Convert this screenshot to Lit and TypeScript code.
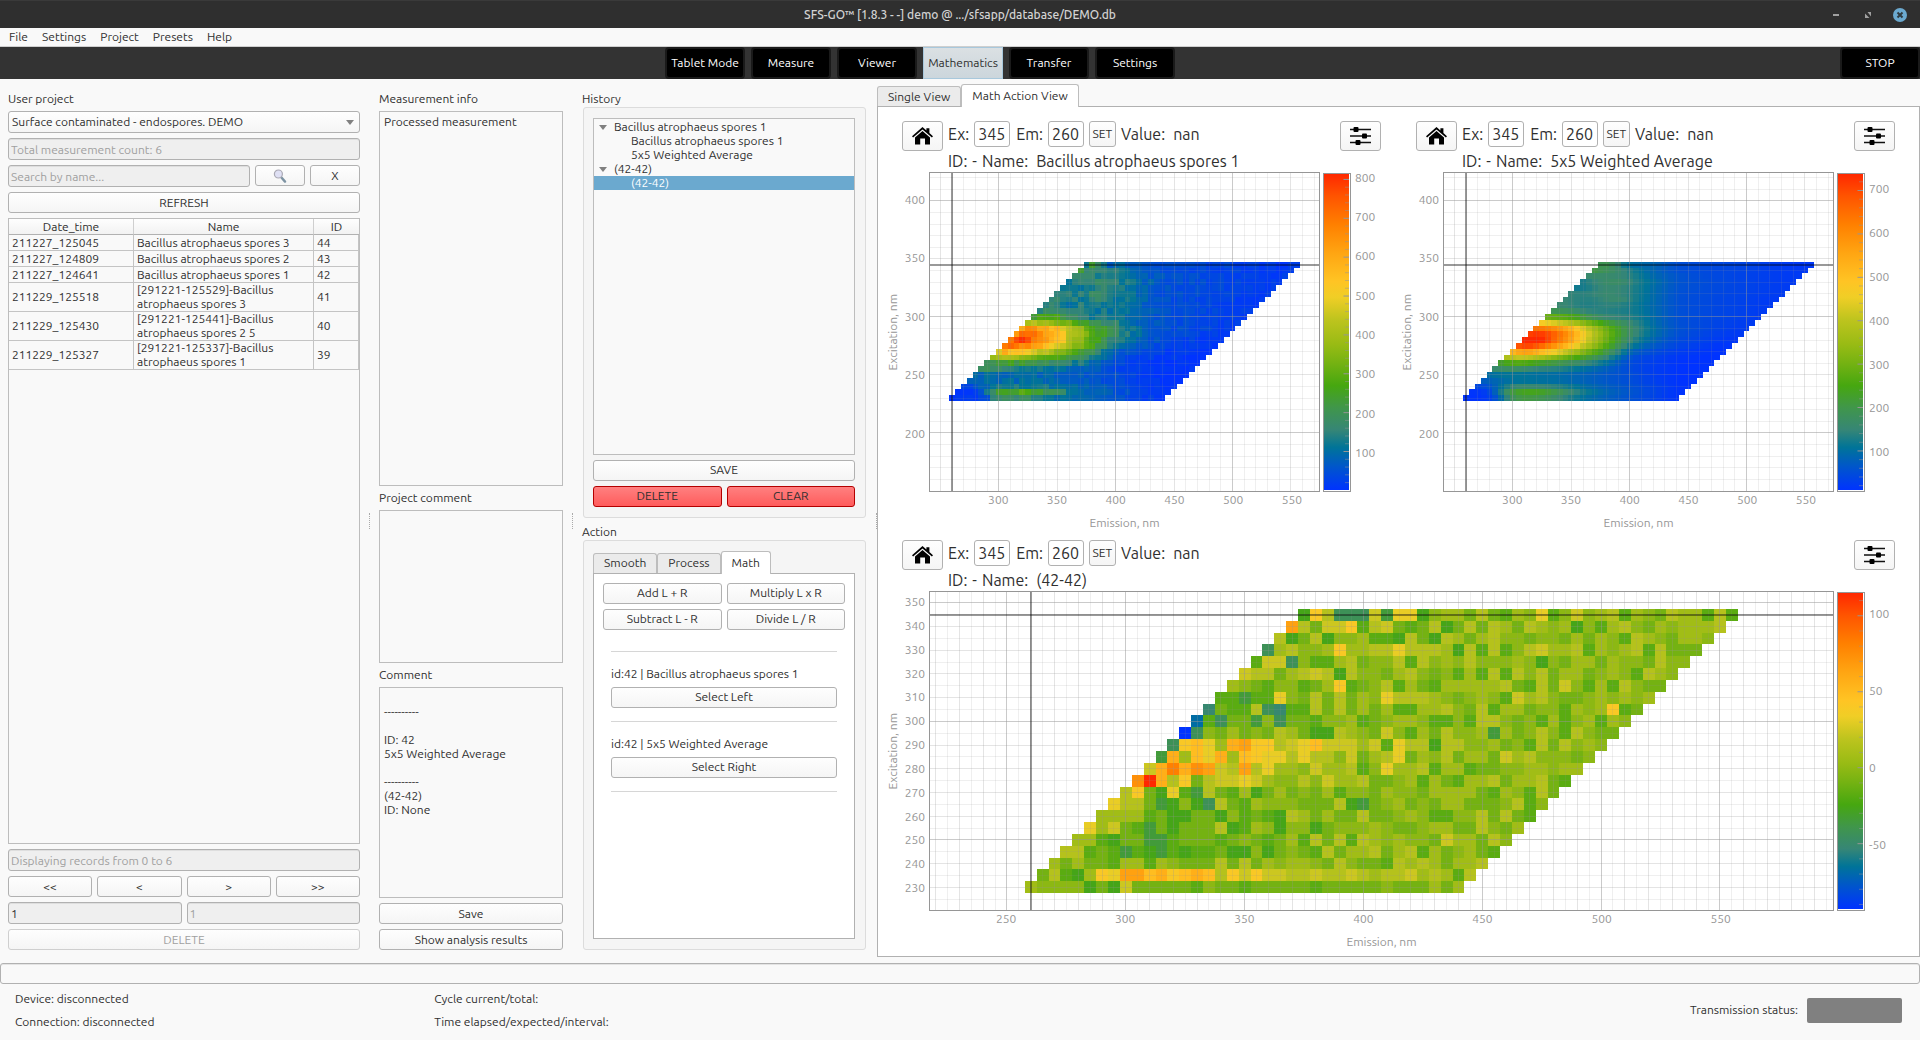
import { LitElement, html, svg, css, nothing } from "lit";
import { customElement, property } from "lit/decorators.js";
import { classMap } from "lit/directives/class-map.js";
import { styleMap } from "lit/directives/style-map.js";

/* ---------- colour scale ---------- */

const STOPS: [number, number[]][] = [
  [0, [0, 51, 255]],
  [0.07, [0, 84, 206]],
  [0.135, [0, 116, 152]],
  [0.19, [54, 134, 118]],
  [0.26, [64, 150, 75]],
  [0.33, [70, 167, 16]],
  [0.4, [116, 178, 18]],
  [0.46, [152, 187, 20]],
  [0.54, [190, 196, 30]],
  [0.61, [240, 206, 38]],
  [0.66, [255, 196, 36]],
  [0.75, [255, 165, 18]],
  [0.84, [255, 128, 0]],
  [0.93, [255, 84, 0]],
  [1, [255, 40, 0]],
];

function colorAt(t: number): string {
  const v = Math.min(1, Math.max(0, t));
  let i = 1;
  while (i < STOPS.length - 1 && STOPS[i][0] < v) i++;
  const [a, ca] = STOPS[i - 1];
  const [b, cb] = STOPS[i];
  const k = (v - a) / (b - a);
  return `rgb(${ca.map((c, n) => Math.round(c + (cb[n] - c) * k)).join(",")})`;
}

/* ---------- spectra: one row per excitation, 345 down to 230 nm ---------- */

const CELLS = 37;
const EXCITATIONS = Array.from({ length: 24 }, (_, i) => 345 - i * 5);

/** Knots of emission wavelength and intensity for each excitation. */
const KNOTS: string[] = [
  "375:150 380:220 387:190 392:80 400:90 420:85 440:50 460:45 500:35 540:15",
  "370:250 375:180 395:160 402:120 420:80 440:45 500:32 540:18",
  "365:150 380:150 400:130 420:85 440:60 460:45 500:30 540:18",
  "360:100 365:140 380:160 390:190 400:140 420:100 440:55 500:32 540:18",
  "355:100 380:150 400:130 420:90 440:55 500:32 540:18",
  "350:150 360:135 380:160 400:130 420:90 440:50 500:30 535:18",
  "345:150 360:125 380:140 390:180 400:130 420:90 440:50 500:28 525:15",
  "340:150 360:120 380:140 400:120 420:85 440:50 500:28 525:15",
  "335:160 350:170 360:130 380:130 400:120 420:90 440:50 500:28 520:15",
  "330:250 350:260 360:190 380:135 400:130 420:90 440:50 500:28 510:15",
  "325:430 340:400 360:320 380:220 400:150 420:90 440:50 500:20",
  "320:580 325:660 340:580 350:550 360:430 380:290 400:165 420:100 440:55 500:18",
  "315:640 320:740 335:660 350:570 360:450 380:300 400:160 420:95 440:50 495:15",
  "310:700 320:790 340:610 350:570 360:430 380:290 400:140 420:80 440:42 490:12",
  "305:680 310:750 320:680 340:550 350:480 360:400 380:260 400:110 420:65 440:35 485:8",
  "300:450 305:580 320:520 330:450 340:430 360:310 380:200 400:70 420:45 440:22 480:6",
  "295:380 300:420 320:370 340:300 360:220 380:140 400:45 420:30 440:14 475:5",
  "290:190 300:260 320:220 340:180 360:150 380:100 400:40 420:25 440:10 470:4",
  "285:170 300:170 320:130 340:130 360:90 380:70 400:40 420:22 440:10 465:4",
  "280:90 320:92 360:75 380:60 400:50 420:24 440:10 460:4",
  "275:70 300:100 340:90 380:60 400:45 420:25 440:10 455:4",
  "270:40 280:50 300:140 340:120 360:90 380:70 400:55 420:35 440:12 450:6",
  "265:8 280:12 285:70 290:150 300:250 320:280 340:210 360:130 380:85 400:60 420:38 440:8",
  "260:5 280:15 290:60 300:190 320:180 340:130 360:90 380:70 400:50 420:35 440:5",
];

function interpolate(knots: string, em: number): number {
  const pts = knots.split(" ").map((p) => p.split(":").map(Number));
  if (em <= pts[0][0]) return pts[0][1];
  for (let i = 1; i < pts.length; i++) {
    if (em <= pts[i][0]) {
      const k = (em - pts[i - 1][0]) / (pts[i][0] - pts[i - 1][0]);
      return pts[i - 1][1] + (pts[i][1] - pts[i - 1][1]) * k;
    }
  }
  return pts[pts.length - 1][1];
}

function jitter(r: number, c: number): number {
  const s = Math.sin(r * 127.1 + c * 311.7) * 43758.5453;
  return (s - Math.floor(s)) * 2 - 1;
}

const clean = EXCITATIONS.map((ex, r) =>
  Array.from({ length: CELLS }, (_, c) => interpolate(KNOTS[r], ex + 30 + c * 5)),
);

const measured = clean.map((row, r) =>
  row.map((v, c) => (v - 2) / 812 + (jitter(r, c) * (10 + Math.min(v, 150) * 0.13)) / 812),
);

/** Weighted mean over the neighbouring cells of the skewed matrix. */
const averaged = clean.map((row, r) =>
  row.map((_, c) => {
    let sum = 0;
    let weight = 0;
    for (let dr = -1; dr <= 1; dr++) {
      for (let dc = -2; dc <= 2; dc++) {
        const other = clean[r + dr]?.[c + dc + dr];
        if (other === undefined) continue;
        const w = (dr ? 1 : 4) * (3 - Math.abs(dc));
        sum += other * w;
        weight += w;
      }
    }
    return (sum / weight - 8) / 710;
  }),
);

/** Difference matrix in 26 levels, a lowest and z highest. */
const DIFFERENCE = [
  "iqngggohppilmmknkjmlpjlolmnjmlknmmjnj",
  "tnkooqjnokjkniknknmknmlmiljmnlkmlmmmn",
  "niknillmjjinkinmkmnllkllkmkmljnmlkmml",
  "gmnllmqmmnnpnnnminjnjlnommnjmlmnjnkkk",
  "joogljjmnkllnjnlmlnlllmlilkmmkmllknll",
  "onnkmnoninllkmnlkljmjnjnlnkmmklmljnml",
  "mlkjlljkmqjklnjmkjmmmmmnkjnkoljmjnlkk",
  "jjhjjplknknkmlpnnnmlklmljomnlkklmlmlm",
  "fkjjngfjjnknkmkmjjmmnlknjmmklljmlmqjk",
  "djgkkhlgkkjllmjklmmljjljnnlkljmjlmjml",
  "aglkmklknmkiinmlkoljmknllmhmklnljnlkk",
  "gqrpmstqqnoprooomojpnninnllmkljnknlml",
  "hsmrpsmrqppnpnnlokmnpkmlnkmmkomnlllkl",
  "osvsutontnpmmlommnjlpmmnjmmjkkllmmlmm",
  "uzsnqknoopomllnlommnkklmjmkjmmnkmmnkj",
  "nqkipjhnkjmikmklkmjllkmllkmmmmkjmljnk",
  "pnnkhilignkjmlllkkknihklmklkmmkkklnj",
  "mmmmjkiikkiljkjinmkmkknkklmljjllnknkj",
  "pmokjhkikkknijmlilliklllmlkklmmkknlkm",
  "mmjikkhhjkkkjklkjkmjnknjnmlmllkommknl",
  "nnjkjhjihjijjkiiliklkjnkmmnkmnjmklmkj",
  "mkmkkjmmjmlkkknknkmlmmlknlkkjnmnmkmmn",
  "knjimqpttrsqrsrnqoqoonnonnonmnnomnmjn",
  "mllllikiokkkkkjlkkjkkkkkjkkkkklkkkmkm",
].map((row) => [...row.padEnd(CELLS, "l")].map((ch) => (ch.charCodeAt(0) - 97) / 25));

/* ---------- chart ---------- */

interface ChartModel {
  name: string;
  cells: number[][];
  x: [number, number];
  y: [number, number];
  steps: [number, number, number];
  xTicks: number[];
  yTicks: number[];
  scale: { min: number; max: number; major: number; minor: number };
}

const range = (from: number, to: number, step: number) => {
  const out: number[] = [];
  for (let v = Math.ceil(from / step) * step; v <= to; v += step) out.push(v);
  return out;
};

const UPPER = {
  x: [241, 574] as [number, number],
  y: [150, 424] as [number, number],
  steps: [100, 50, 10] as [number, number, number],
  xTicks: range(300, 550, 50),
  yTicks: range(200, 400, 50),
};

const CHARTS: ChartModel[] = [
  { name: "Bacillus atrophaeus spores 1", cells: measured, ...UPPER, scale: { min: 1, max: 814, major: 100, minor: 20 } },
  { name: "5x5 Weighted Average", cells: averaged, ...UPPER, scale: { min: 10, max: 738, major: 100, minor: 20 } },
  {
    name: "(42-42)",
    cells: DIFFERENCE,
    x: [217.6, 597.6],
    y: [220.4, 354.6],
    steps: [50, 10, 5],
    xTicks: range(250, 550, 50),
    yTicks: range(230, 350, 10),
    scale: { min: -93, max: 115, major: 50, minor: 10 },
  },
];

const controls = css`
  * {
    box-sizing: border-box;
  }
  button,
  input,
  select,
  textarea {
    font: inherit;
    color: inherit;
    margin: 0;
    min-width: 0;
    outline: none;
  }
  button {
    height: 21px;
    padding: 0 4px;
    border: 1px solid #b1b1b1;
    border-radius: 3px;
    background: linear-gradient(#fefefe, #f5f5f5);
    line-height: 18px;
  }
`;

@customElement("spectrum-chart")
export class SpectrumChart extends LitElement {
  static styles = [
    controls,
    css`
      :host {
        display: grid;
        grid-template-columns: 14px 29px minmax(0, 1fr) 3px 28px 30px;
        grid-template-rows: 30px 21px minmax(120px, 1fr) 39px;
        min-width: 0;
      }
      .bar {
        grid-column: 1 / -1;
        display: flex;
        align-items: flex-start;
        padding-left: 16px;
        font-size: 16px;
        line-height: 26px;
      }
      .bar .icon {
        width: 41px;
        height: 30px;
        padding: 0;
        display: grid;
        place-items: center;
      }
      .bar label {
        margin-left: 5px;
      }
      .bar input {
        width: 36px;
        height: 26px;
        margin-left: 5px;
        margin-right: 1px;
        padding: 0 3px;
        border: 1px solid #b1b1b1;
        border-radius: 3px;
        background: #fff;
      }
      .bar .set {
        width: 27px;
        height: 26px;
        margin: 0 5px 0 4px;
        padding: 0;
        font-size: 12px;
      }
      .bar output {
        margin-left: 8px;
        flex: 1;
      }
      .name {
        grid-column: 1 / -1;
        display: flex;
        gap: 5px;
        padding-left: 62px;
        font-size: 16px;
        line-height: 21px;
        white-space: nowrap;
      }
      .name b {
        font-weight: 400;
        margin-left: 3px;
      }
      .ylabel {
        display: grid;
        place-items: center;
        color: #969696;
      }
      .ylabel span {
        writing-mode: vertical-rl;
        transform: rotate(180deg);
        white-space: nowrap;
      }
      .yticks,
      .xticks,
      .sticks {
        position: relative;
        color: #969696;
      }
      .tick {
        position: absolute;
        line-height: 14px;
      }
      .yticks .tick {
        right: 4px;
        transform: translateY(-50%);
      }
      .xticks .tick {
        top: 1px;
        transform: translateX(-50%);
      }
      .sticks .tick {
        left: 4px;
        transform: translateY(-50%);
      }
      .plot {
        grid-column: 3;
        contain: size;
        border: 1px solid #969696;
        background: #fff;
        min-height: 0;
        display: grid;
      }
      .plot svg {
        width: 100%;
        height: 100%;
        min-height: 0;
        display: block;
      }
      .minor,
      .mid,
      .major {
        vector-effect: non-scaling-stroke;
        stroke-width: 1px;
        stroke: rgba(150, 150, 150, 0.15);
      }
      .mid {
        stroke: rgba(150, 150, 150, 0.26);
      }
      .major {
        stroke: rgba(150, 150, 150, 0.5);
      }
      .cross {
        vector-effect: non-scaling-stroke;
        stroke-width: 2px;
        stroke: rgba(0, 0, 0, 0.4);
      }
      .scale {
        grid-column: 5;
        contain: size;
        border: 1px solid #969696;
        padding: 0 1px 1px 0;
        margin-top: 1px;
        display: grid;
        min-height: 0;
      }
      .scale svg {
        width: 100%;
        height: 100%;
        min-height: 0;
        display: block;
      }
      .scale line {
        stroke: #969696;
      }
      .xfoot {
        grid-column: 3;
        display: grid;
        grid-template-rows: 16px 1fr;
        color: #969696;
        text-align: center;
      }
      .xlabel {
        line-height: 14px;
        padding-top: 8px;
      }
    `,
  ];

  @property({ attribute: false }) model!: ChartModel;

  private cells() {
    const { cells, y } = this.model;
    return cells.map((row, r) => {
      const ex = EXCITATIONS[r];
      return row.map(
        (t, c) => svg`<rect x=${ex + 27.5 + c * 5} y=${y[1] - ex - 2.5} width="5" height="5" fill=${colorAt(t)} />`,
      );
    });
  }

  private grid() {
    const { x, y, steps } = this.model;
    const level = (v: number) => (v % steps[0] === 0 ? "major" : v % steps[1] === 0 ? "mid" : "minor");
    return [
      ...range(x[0], x[1], steps[2]).map(
        (v) => svg`<line class=${level(v)} x1=${v} x2=${v} y1="0" y2=${y[1] - y[0]} />`,
      ),
      ...range(y[0], y[1], steps[2]).map(
        (v) => svg`<line class=${level(v)} x1=${x[0]} x2=${x[1]} y1=${y[1] - v} y2=${y[1] - v} />`,
      ),
    ];
  }

  render() {
    const m = this.model;
    const w = m.x[1] - m.x[0];
    const h = m.y[1] - m.y[0];
    const s = m.scale;
    const pct = (v: number) => `${(((s.max - v) / (s.max - s.min)) * 100).toFixed(2)}%`;
    return html`
      <div class="bar">
        <button class="icon" aria-label="Reset view">
          <svg width="21" height="18" viewBox="0 0 21 18">
            <path d="M10.5 0 14.4 3.4V1.2H17.4V6L21 9.2 19.9 10.6 10.5 2.4 1.1 10.6 0 9.2Z" />
            <path d="M10.5 4 18 10.4V17.4H13V11.6H8.2V17.4H3V10.4Z" />
          </svg>
        </button>
        <label for="ex">Ex:</label><input id="ex" .value=${"345"} />
        <label for="em">Em:</label><input id="em" .value=${"260"} />
        <button class="set">SET</button>
        <span>Value:</span><output>nan</output>
        <button class="icon" aria-label="Chart settings">
          <svg width="21" height="18" viewBox="0 0 21 18">
            <path d="M0 2.5H21M0 9H21M0 15.5H21" stroke="#111" stroke-width="1.5" />
            <rect x="3.5" y="0" width="5" height="5" rx="1" />
            <rect x="12" y="6.5" width="5" height="5" rx="1" />
            <rect x="5.5" y="13" width="5" height="5" rx="1" />
          </svg>
        </button>
      </div>
      <div class="name"><span>ID:</span><span>-</span><span>Name:</span><b>${m.name}</b></div>
      <div class="ylabel"><span>Excitation, nm</span></div>
      <div class="yticks">
        ${m.yTicks.map(
          (v) => html`<span class="tick" style=${styleMap({ top: `${((m.y[1] - v) / h) * 100}%` })}>${v}</span>`,
        )}
      </div>
      <div class="plot">
        <svg viewBox="${m.x[0]} 0 ${w} ${h}" preserveAspectRatio="none" role="img" aria-label=${m.name}>
          <g shape-rendering="crispEdges">${this.cells()}${this.grid()}
            <line class="cross" x1="260" x2="260" y1="0" y2=${h} />
            <line class="cross" x1=${m.x[0]} x2=${m.x[1]} y1=${m.y[1] - 345} y2=${m.y[1] - 345} />
          </g>
        </svg>
      </div>
      <div class="scale">
        <svg aria-hidden="true">
          <defs>
            <linearGradient id="ramp" x1="0" y1="1" x2="0" y2="0">
              ${STOPS.map(([t]) => svg`<stop offset=${t} stop-color=${colorAt(t)} />`)}
            </linearGradient>
          </defs>
          <rect width="100%" height="100%" fill="url(#ramp)" />
          ${range(s.min, s.max, s.minor).map(
            (v) => svg`<line x1=${v % s.major ? "84%" : "78%"} x2="100%" y1=${pct(v)} y2=${pct(v)}
              stroke-opacity=${v % s.major ? 0.5 : 1} />`,
          )}
        </svg>
      </div>
      <div class="sticks">
        ${range(s.min, s.max, s.major).map(
          (v) => html`<span class="tick" style=${styleMap({ top: pct(v) })}>${v}</span>`,
        )}
      </div>
      <div class="xfoot">
        <div class="xticks">
          ${m.xTicks.map(
            (v) => html`<span class="tick" style=${styleMap({ left: `${((v - m.x[0]) / w) * 100}%` })}>${v}</span>`,
          )}
        </div>
        <div class="xlabel">Emission, nm</div>
      </div>
    `;
  }
}

/* ---------- application ---------- */

const MENU = ["File", "Settings", "Project", "Presets", "Help"];
const MODES = ["Tablet Mode", "Measure", "Viewer", "Mathematics", "Transfer", "Settings"];
const RECORDS = [
  ["211227_125045", "Bacillus atrophaeus spores 3", "44"],
  ["211227_124809", "Bacillus atrophaeus spores 2", "43"],
  ["211227_124641", "Bacillus atrophaeus spores 1", "42"],
  ["211229_125518", "[291221-125529]-Bacillus atrophaeus spores 3", "41"],
  ["211229_125430", "[291221-125441]-Bacillus atrophaeus spores 2 5", "40"],
  ["211229_125327", "[291221-125337]-Bacillus atrophaeus spores 1", "39"],
];
const HISTORY = [
  { text: "Bacillus atrophaeus spores 1", level: 1 },
  { text: "Bacillus atrophaeus spores 1", level: 2 },
  { text: "5x5 Weighted Average", level: 2 },
  { text: "(42-42)", level: 1 },
  { text: "(42-42)", level: 2, selected: true },
];
const COMMENT = "\n----------\n\nID: 42\n5x5 Weighted Average\n\n----------\n(42-42)\nID: None";

const arrow = html`<svg class="arrow" width="8" height="5" viewBox="0 0 8 5" aria-hidden="true">
  <path d="M0 0H8L4 5Z" fill="#808080" />
</svg>`;

@customElement("app-root")
export class AppRoot extends LitElement {
  static styles = [
    controls,
    css`
      :host {
        display: flex;
        flex-direction: column;
        min-height: 100vh;
        background: #f9f9f9;
        color: #2f2f2f;
        font: 12px/14px Ubuntu, "Open Sans", sans-serif;
      }
      .titlebar {
        display: grid;
        grid-template-columns: 1fr auto 1fr;
        align-items: center;
        height: 28px;
        background: #2f2f2f;
        border-top: 1px solid #3a3a3a;
        color: #d3d3d3;
        font-weight: 500;
      }
      .window {
        grid-column: 3;
        justify-self: end;
        display: flex;
        gap: 16px;
        padding-right: 12px;
      }
      .window button {
        width: 16px;
        height: 16px;
        padding: 0;
        border: 0;
        background: none;
        display: grid;
        place-items: center;
      }
      .menu {
        display: flex;
        gap: 14px;
        height: 19px;
        padding-left: 9px;
        border-bottom: 1px solid #cfcfcf;
      }
      .menu button {
        height: 18px;
        padding: 0;
        border: 0;
        background: none;
      }
      .modes {
        display: flex;
        justify-content: space-between;
        background: #333;
        height: 32px;
      }
      .modes nav {
        flex: 1;
        display: flex;
        justify-content: center;
        gap: 6px;
      }
      .modes button {
        min-width: 80px;
        height: 32px;
        padding: 0 4px;
        border: 2px solid #1a1a1a;
        border-radius: 4px;
        background: #000;
        color: #fff;
      }
      .modes .on {
        border: 1px solid #a8c8dc;
        border-radius: 0;
        background: linear-gradient(#dbe0e3, #ccd6dc);
        color: #2f2f2f;
      }
      main {
        flex: 1;
        display: grid;
        grid-template-columns:
          minmax(240px, 352fr) 19px minmax(130px, 184fr) 19px minmax(220px, 284fr)
          11px minmax(560px, 1043fr);
        padding-left: 8px;
      }
      .grip {
        align-self: center;
        justify-self: center;
        height: 16px;
        border-left: 1px dotted #aaa;
      }
      .grip.end {
        justify-self: end;
      }
      .col {
        display: flex;
        flex-direction: column;
        gap: 5px;
        padding: 13px 0 13px;
        min-width: 0;
      }
      .col > label,
      .col > h2 {
        margin: 0;
        font-weight: 400;
        font-size: 12px;
        line-height: 14px;
      }
      .row {
        display: grid;
        gap: 5px;
      }
      .search {
        grid-template-columns: minmax(0, 1fr) 50px 50px;
      }
      .four {
        grid-template-columns: repeat(4, minmax(0, 1fr));
      }
      .two {
        grid-template-columns: repeat(2, minmax(0, 1fr));
      }
      .field {
        width: 100%;
        height: 22px;
        padding: 0 2px;
        border: 1px solid #b1b1b1;
        border-radius: 3px;
        background: #efefef;
        box-shadow: inset 0 1px #dedede;
      }
      .field::placeholder,
      .field:disabled {
        color: #a0a0a0;
      }
      .picker {
        display: grid;
        align-items: center;
      }
      .picker select {
        grid-area: 1 / 1;
        appearance: none;
        height: 22px;
        padding: 0 20px 0 3px;
        border: 1px solid #b1b1b1;
        border-radius: 3px;
        background: linear-gradient(#fefefe, #f5f5f5);
      }
      .picker .arrow {
        grid-area: 1 / 1;
        justify-self: end;
        margin-right: 6px;
        pointer-events: none;
      }
      .lens {
        display: grid;
        place-items: center;
      }
      button:disabled {
        color: #a0a0a0;
        border-color: #cfcfcf;
      }
      .records {
        flex: 1;
        border: 1px solid #bdbdbd;
      }
      table {
        width: 100%;
        border-collapse: separate;
        border-spacing: 0;
        table-layout: fixed;
      }
      th {
        height: 16px;
        padding: 0;
        font-weight: 400;
        border-right: 1px solid #cfcfcf;
        border-bottom: 1px solid #b1b1b1;
        background: linear-gradient(#fefefe, #f2f2f2);
      }
      th:last-child {
        border-right: 0;
      }
      td {
        padding: 0 3px;
        height: 16px;
        border-right: 1px solid #c4c4c4;
        border-bottom: 1px solid #c4c4c4;
      }
      .date {
        width: 125px;
      }
      .id {
        width: 45px;
      }
      textarea {
        display: block;
        resize: none;
        width: 100%;
        padding: 3px 4px;
        border: 1px solid #bdbdbd;
        border-radius: 0;
        background: #f9f9f9;
        line-height: 14px;
      }
      .info {
        flex: 381 1 0;
      }
      .project {
        flex: 151 1 0;
      }
      .comment {
        flex: 211 1 0;
      }
      .col.actions {
        gap: 1px;
      }
      .group {
        display: flex;
        flex-direction: column;
        gap: 5px;
        margin-left: 1px;
        padding: 10px 10px 10px 9px;
        border: 1px solid #dcdcdc;
        border-radius: 3px;
        background: #f5f5f5;
      }
      .group + h2 {
        padding-top: 6px;
      }
      .grow {
        flex: 1 1 0;
      }
      .tree {
        flex: 1;
        margin: 0;
        padding: 1px 0 0;
        list-style: none;
        border: 1px solid #bdbdbd;
        background: #f9f9f9;
      }
      .tree li {
        display: flex;
        align-items: center;
        height: 14px;
        gap: 7px;
        padding-left: 5px;
      }
      .tree .child {
        padding-left: 37px;
      }
      .tree .selected {
        background: #6ba9cf;
        color: #fff;
      }
      .danger {
        border-color: #b40000;
        background: linear-gradient(#ff8080, #ff5c5c);
      }
      .tabs {
        display: flex;
        align-items: flex-end;
        height: 22px;
      }
      .tabs button {
        height: 20px;
        padding: 0 10px;
        border: 1px solid #bdbdbd;
        border-bottom: 0;
        border-radius: 3px 3px 0 0;
        background: #ebebeb;
      }
      .tabs .on {
        height: 23px;
        margin-bottom: -1px;
        background: #fff;
        z-index: 1;
      }
      .tabbed {
        flex: 1;
        display: flex;
        flex-direction: column;
        min-width: 0;
      }
      .pane {
        flex: 1;
        border: 1px solid #b1b1b1;
        background: #fff;
      }
      .math {
        padding: 9px;
      }
      .operands {
        display: flex;
        flex-direction: column;
        padding: 21px 8px 0;
      }
      .operands hr {
        width: 100%;
        margin: 0;
        border: 0;
        border-top: 1px solid #d6d6d6;
      }
      .operands p {
        margin: 15px 0 6px;
      }
      .operands button {
        margin-bottom: 13px;
      }
      .view {
        padding: 5px 0 6px;
      }
      .charts {
        display: grid;
        grid-template-columns: repeat(2, minmax(0, 1fr));
        grid-template-rows: repeat(2, minmax(0, 1fr));
        gap: 9px 19px;
        padding: 14px 24px 6px 8px;
      }
      .wide {
        grid-column: 1 / -1;
      }
      .progress {
        height: 21px;
        border: 1px solid #b1b1b1;
        border-radius: 3px;
        box-shadow: inset 0 1px #e4e4e4;
      }
      footer {
        display: grid;
        grid-template-columns: 419fr 1255fr auto auto;
        align-items: center;
        height: 56px;
        padding: 0 18px 4px 15px;
      }
      footer p {
        margin: 0;
        line-height: 23px;
      }
      .lamp {
        width: 95px;
        height: 25px;
        margin-left: 9px;
        border-radius: 2px;
        background: #808080;
      }
    `,
  ];

  private tabs(names: string[], active: string) {
    return html`<div class="tabs" role="tablist">
      ${names.map(
        (n) => html`<button role="tab" aria-selected=${n === active} class=${classMap({ on: n === active })}>${n}</button>`,
      )}
    </div>`;
  }

  render() {
    return html`
      <header class="titlebar">
        <span></span>
        <span>SFS-GO™ [1.8.3 - -] demo @ .../sfsapp/database/DEMO.db</span>
        <div class="window">
          <button aria-label="Minimize">
            <svg width="16" height="16"><path d="M5 7H11V9H5Z" fill="#a0a0a0" /></svg>
          </button>
          <button aria-label="Restore">
            <svg width="16" height="16"><path d="M7.5 5H11V9.5ZM5 6.5V11H9.5Z" fill="#a0a0a0" /></svg>
          </button>
          <button aria-label="Close">
            <svg width="16" height="16">
              <circle cx="8" cy="8" r="7" fill="#6ba9cf" />
              <path d="M5.5 5.5 10.5 10.5M10.5 5.5 5.5 10.5" stroke="#2f3a40" stroke-width="2" />
            </svg>
          </button>
        </div>
      </header>
      <nav class="menu">${MENU.map((m) => html`<button>${m}</button>`)}</nav>
      <div class="modes">
        <nav>${MODES.map((m) => html`<button class=${classMap({ on: m === "Mathematics" })}>${m}</button>`)}</nav>
        <button class="stop">STOP</button>
      </div>

      <main>
        <section class="col">
          <label for="project">User project</label>
          <div class="picker">
            <select id="project"><option>Surface contaminated - endospores. DEMO</option></select>
            ${arrow}
          </div>
          <input class="field" aria-label="Measurement count" disabled .value=${"Total measurement count: 6"} />
          <div class="row search">
            <input class="field" aria-label="Search by name" placeholder="Search by name..." />
            <button class="lens" aria-label="Search">
              <svg width="14" height="14" viewBox="0 0 14 14">
                <path d="M8 8 12 12.6" stroke="#7d93a3" stroke-width="2.4" stroke-linecap="round" />
                <circle cx="5.4" cy="5" r="4" fill="#dfe0f4" stroke="#aaa9b4" stroke-width="1.2" />
              </svg>
            </button>
            <button>X</button>
          </div>
          <button>REFRESH</button>
          <div class="records">
            <table>
              <thead>
                <tr><th class="date">Date_time</th><th>Name</th><th class="id">ID</th></tr>
              </thead>
              <tbody>
                ${RECORDS.map((r) => html`<tr>${r.map((c) => html`<td>${c}</td>`)}</tr>`)}
              </tbody>
            </table>
          </div>
          <input class="field" aria-label="Records shown" disabled .value=${"Displaying records from 0 to 6"} />
          <div class="row four">${["<<", "<", ">", ">>"].map((t) => html`<button>${t}</button>`)}</div>
          <div class="row two">
            <input class="field" aria-label="Page" .value=${"1"} />
            <input class="field" aria-label="Page count" disabled .value=${"1"} />
          </div>
          <button disabled>DELETE</button>
        </section>
        <div class="grip"></div>

        <section class="col">
          <label for="info">Measurement info</label>
          <textarea id="info" class="info" readonly .value=${"Processed measurement"}></textarea>
          <label for="pcomment">Project comment</label>
          <textarea id="pcomment" class="project"></textarea>
          <label for="comment">Comment</label>
          <textarea id="comment" class="comment" .value=${COMMENT}></textarea>
          <button>Save</button>
          <button>Show analysis results</button>
        </section>
        <div class="grip"></div>

        <section class="col actions">
          <h2>History</h2>
          <div class="group grow">
            <ul class="tree" role="tree">
              ${HISTORY.map(
                (n) => html`<li
                  role="treeitem"
                  aria-selected=${Boolean(n.selected)}
                  class=${classMap({ child: n.level === 2, selected: Boolean(n.selected) })}
                >${n.level === 1 ? arrow : nothing}<span>${n.text}</span></li>`,
              )}
            </ul>
            <button>SAVE</button>
            <div class="row two">
              <button class="danger">DELETE</button>
              <button class="danger">CLEAR</button>
            </div>
          </div>
          <h2>Action</h2>
          <div class="group grow">
            <div class="tabbed">
              ${this.tabs(["Smooth", "Process", "Math"], "Math")}
              <div class="pane math">
                <div class="row two">
                  ${["Add L + R", "Multiply L x R", "Subtract L - R", "Divide L / R"].map(
                    (t) => html`<button>${t}</button>`,
                  )}
                </div>
                <div class="operands">
                  <hr />
                  <p>id:42 | Bacillus atrophaeus spores 1</p>
                  <button>Select Left</button>
                  <hr />
                  <p>id:42 | 5x5 Weighted Average</p>
                  <button>Select Right</button>
                  <hr />
                </div>
              </div>
            </div>
          </div>
        </section>
        <div class="grip end"></div>

        <section class="tabbed view">
          ${this.tabs(["Single View", "Math Action View"], "Math Action View")}
          <div class="pane charts">
            ${CHARTS.map(
              (m, i) => html`<spectrum-chart class=${classMap({ wide: i === 2 })} .model=${m}></spectrum-chart>`,
            )}
          </div>
        </section>
      </main>

      <div class="progress"></div>
      <footer>
        <div><p>Device: disconnected</p><p>Connection: disconnected</p></div>
        <div><p>Cycle current/total:</p><p>Time elapsed/expected/interval:</p></div>
        <span>Transmission status:</span>
        <div class="lamp"></div>
      </footer>
    `;
  }
}
